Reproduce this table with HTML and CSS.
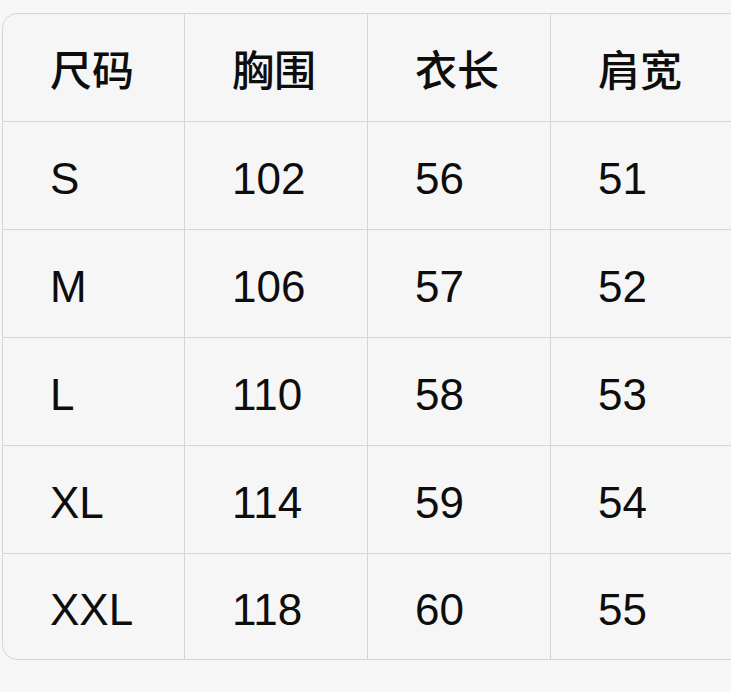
FILE: index.html
```html
<!DOCTYPE html>
<html lang="zh">
<head>
<meta charset="utf-8">
<link rel="stylesheet" href="styles.css">
</head>
<body>
<div class="size-table">
  <div class="cell head">尺码</div><div class="cell head">胸围</div><div class="cell head">衣长</div><div class="cell head last-col">肩宽</div>
  <div class="cell">S</div><div class="cell">102</div><div class="cell">56</div><div class="cell last-col">51</div>
  <div class="cell">M</div><div class="cell">106</div><div class="cell">57</div><div class="cell last-col">52</div>
  <div class="cell">L</div><div class="cell">110</div><div class="cell">58</div><div class="cell last-col">53</div>
  <div class="cell">XL</div><div class="cell">114</div><div class="cell">59</div><div class="cell last-col">54</div>
  <div class="cell last-row">XXL</div><div class="cell last-row">118</div><div class="cell last-row">60</div><div class="cell last-row last-col">55</div>
</div>
</body>
</html>
```
FILE: styles.css
```css
html, body {
  margin: 0;
  padding: 0;
  background: #f7f7f7;
  overflow: hidden;
}
body {
  padding: 13px 0 0 2px;
  width: 731px;
  height: 692px;
  box-sizing: border-box;
  font-family: "Liberation Sans", "Noto Sans CJK SC", sans-serif;
  color: #0d0d0d;
}
.size-table {
  display: grid;
  grid-template-columns: 182px 183px 183px 200px;
  grid-template-rows: repeat(5, 108px) 105px;
  width: max-content;
  border: 1px solid #d5d5d5;
  border-radius: 15px;
  background: #f6f6f6;
  overflow: hidden;
}
.cell {
  display: flex;
  align-items: center;
  padding-left: 47px;
  padding-top: 6px;
  font-size: 44px;
  border-right: 1px solid #d5d5d5;
  border-bottom: 1px solid #d5d5d5;
}
.cell.head {
  font-family: "Noto Sans CJK SC", sans-serif;
  font-weight: 500;
  font-size: 42px;
  padding-top: 0;
}
.cell.last-col {
  border-right: none;
}
.cell.last-row {
  border-bottom: none;
}
```
